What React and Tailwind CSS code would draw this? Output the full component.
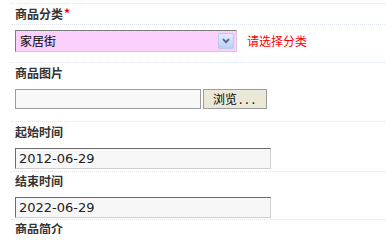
import { useState } from "react";

const CJK = "font-['Noto_Sans_CJK_SC',sans-serif]";

// dotted separator row wrapper
function Row({ className = "", children }) {
    return (
        <div className={`border-t border-dotted border-[#dde4ec] pl-[4px] ${className}`}>
            {children}
        </div>
    );
}

function Label({ children, required, className = "" }) {
    return (
        <div className={`flex items-center text-[12px] font-bold text-[#333] leading-none ${className}`}>
            {children}
            {required && <span className="text-[#ff0000] ml-[1px] -mt-[2px]">*</span>}
        </div>
    );
}

export default function App() {
    const [start, setStart] = useState("2012-06-29");
    const [end, setEnd] = useState("2022-06-29");

    return (
        <div className={`w-[385px] h-[234px] overflow-hidden bg-white pt-[3px] pl-[11px] ${CJK}`}>
            {/* 商品分类 */}
            <Row>
                <Label required className="h-[20px]">商品分类</Label>
            </Row>
            <Row className="pt-[5px] pb-[10px] flex items-center">
                <div className="w-[222px] h-[22px] flex items-center bg-[#fcd0fc] border border-t-[#7a7a7a] border-l-[#7a7a7a] border-r-[#d4c8d4] border-b-[#d4c8d4]">
                    <span className="pl-[4px] text-[12px] text-black flex-1">家居街</span>
                    <div className="w-[16px] h-[16px] mr-[2px] flex items-center justify-center border border-[#b7c9ef] rounded-[2px] bg-gradient-to-b from-[#e4ecfb] to-[#b9cef5]">
                        <svg width="8" height="6" viewBox="0 0 8 6">
                            <path d="M1 1.2 L4 4.2 L7 1.2" fill="none" stroke="#4d6185" strokeWidth="1.8" />
                        </svg>
                    </div>
                </div>
                <span className="ml-[10px] text-[12px] text-[#ff0000]">请选择分类</span>
            </Row>

            {/* 商品图片 */}
            <Row className="pb-[12px]">
                <Label className="h-[20px]">商品图片</Label>
                <div className="mt-[6px] flex items-center gap-[2px]">
                    <div className="w-[186px] h-[20px] bg-[#f8f8f8] border border-[#9c9c9c]" />
                    <button
                        type="button"
                        className="w-[64px] h-[20px] bg-[#ebe8d8] border border-[#9c9c9c] text-[12px] text-black leading-none flex items-center pl-[9px]"
                    >
                        浏览<span className="tracking-[3px] ml-[2px]">...</span>
                    </button>
                </div>
            </Row>

            {/* 起始时间 */}
            <Row className="pb-[2px]">
                <Label className="h-[20px]">起始时间</Label>
                <input
                    value={start}
                    onChange={(e) => setStart(e.target.value)}
                    className="mt-[6px] block w-[256px] h-[21px] bg-[#f7f7f7] border border-t-[#6b6b6b] border-l-[#6b6b6b] border-r-[#cfcfcf] border-b-[#cfcfcf] px-[3px] text-[13px] text-[#222] font-['DejaVu_Sans',sans-serif] outline-none"
                />
            </Row>

            {/* 结束时间 */}
            <Row className="pb-[1px]">
                <Label className="h-[18px]">结束时间</Label>
                <input
                    value={end}
                    onChange={(e) => setEnd(e.target.value)}
                    className="mt-[7px] block w-[256px] h-[21px] bg-[#f7f7f7] border border-t-[#6b6b6b] border-l-[#6b6b6b] border-r-[#cfcfcf] border-b-[#cfcfcf] px-[3px] text-[13px] text-[#222] font-['DejaVu_Sans',sans-serif] outline-none"
                />
            </Row>

            {/* 商品简介 */}
            <Row>
                <Label className="h-[18px]">商品简介</Label>
            </Row>
        </div>
    );
}
